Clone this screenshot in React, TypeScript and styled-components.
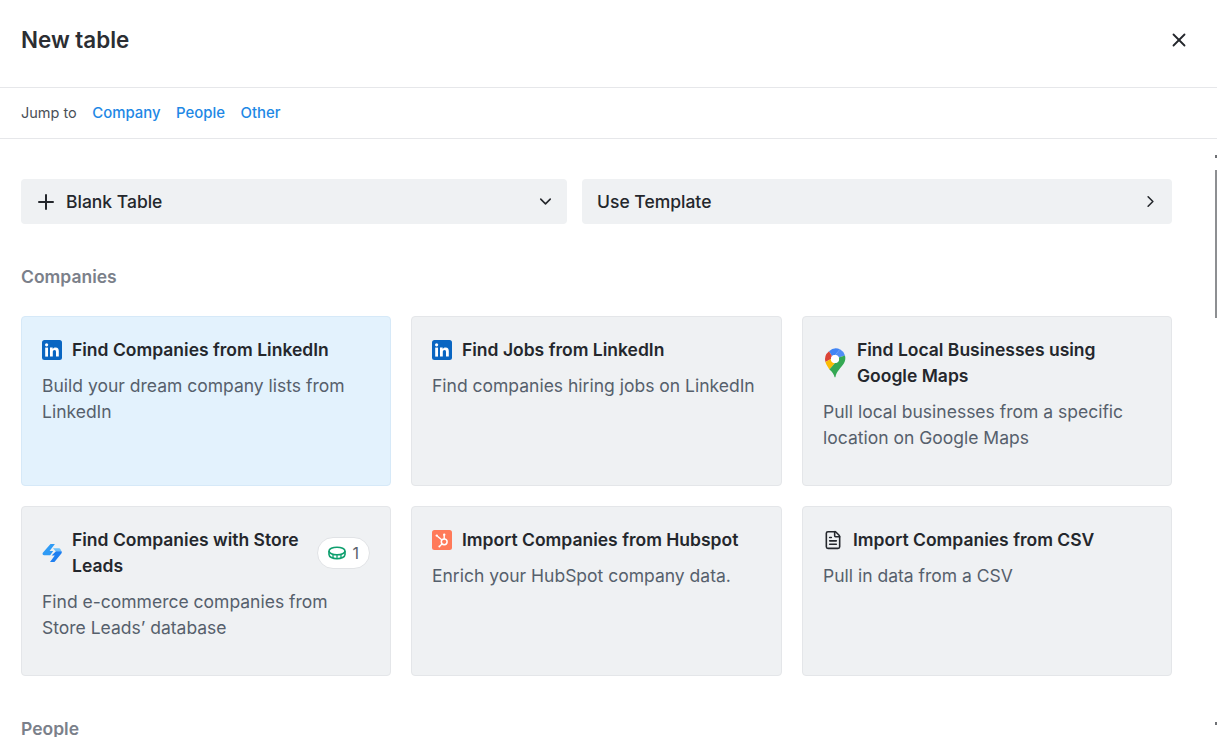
import { ReactNode } from "react";
import styled, { createGlobalStyle } from "styled-components";
import { ChevronDown, ChevronRight, FileText, Plus, X } from "lucide-react";

const GlobalStyle = createGlobalStyle`
  html, body {
    margin: 0;
    height: 100%;
    overflow: hidden;
    background: #fff;
    font-family: "Inter", "Liberation Sans", sans-serif;
    color: #24272c;
  }
  * {
    box-sizing: border-box;
  }
`;

const LinkedInIcon = () => (
  <svg width="20" height="20" viewBox="0 0 20 20">
    <rect width="20" height="20" rx="2.5" fill="#0a66c2" />
    <rect x="3.2" y="7.6" width="2.8" height="9" fill="#fff" />
    <circle cx="4.6" cy="4.8" r="1.6" fill="#fff" />
    <path
      d="M8 7.6h2.7v1.3c.5-.9 1.5-1.5 2.8-1.5 2.5 0 3.3 1.6 3.3 4v5.2H14v-4.6c0-1.2-.3-2.1-1.4-2.1-1.2 0-1.8.9-1.8 2.1v4.6H8z"
      fill="#fff"
    />
  </svg>
);

const MapsIcon = () => (
  <svg width="24" height="30" viewBox="-1 0 24 30">
    <path d="M5 3.2A10.4 10.4 0 0 1 16 1.3L11 7a4 4 0 0 0-3 1.3z" fill="#4285f4" />
    <path d="M16 1.3a10.4 10.4 0 0 1 5 6.2l-6.2 2A4 4 0 0 0 11 7z" fill="#4f8df5" />
    <path d="M5 3.2l3 5.1a4 4 0 0 0-1 2.7L1.4 14A10.6 10.6 0 0 1 5 3.2z" fill="#db4437" />
    <path d="M1.4 14L7 11a4 4 0 0 0 4 4l-5.6 6.4C3.8 19 2.2 16.6 1.4 14z" fill="#fbbc04" />
    <path d="M21 7.5c.8 3 .2 5.6-1.2 8-2.6 4.2-7.3 7.6-8.4 13.8h-.8c-.5-2.9-2.3-5.6-5.2-7.9L11 15a4 4 0 0 0 3.8-5.5z" fill="#34a853" />
    <circle cx="11" cy="11" r="4" fill="#fff" />
  </svg>
);

const StoreLeadsIcon = () => (
  <svg width="20" height="20" viewBox="0 0 20 20">
    <path d="M8.5 1h4.4L7.6 8h3.6l-3 4.2H2.2C.6 12.2 0 11 1 9.6z" fill="#2f9bf5" />
    <path d="M11 5.2h5.6c1 0 1.6.4 2 1.2l.9 1.9h-5.9z" fill="#6ec1fa" />
    <path d="M14 8.3h5.5c.5.8.4 1.4-.1 2.2L12.4 19H8l4.8-6.6H9.6z" fill="#1e7ff0" />
  </svg>
);

const HubspotIcon = () => (
  <svg width="20" height="20" viewBox="0 0 20 20">
    <rect width="20" height="20" rx="2.5" fill="#ff7a59" />
    <circle cx="12.2" cy="11.8" r="2.9" fill="none" stroke="#fff" strokeWidth="1.5" />
    <path d="M12.2 8.9V5.6M10 10L5.4 6.2M10 14l-2.2 2" stroke="#fff" strokeWidth="1.4" fill="none" />
    <circle cx="12.2" cy="4.8" r="1.2" fill="#fff" />
    <circle cx="4.8" cy="5.6" r="1.2" fill="#fff" />
    <circle cx="7.4" cy="16.4" r="1" fill="#fff" />
  </svg>
);

const CoinIcon = () => (
  <svg width="18" height="14" viewBox="0 0 18 14" fill="none" stroke="#0e9f6e" strokeWidth="1.6">
    <ellipse cx="9" cy="5" rx="8" ry="3.8" />
    <path d="M1 5v3.6C1 10.9 4.6 12.8 9 12.8s8-1.9 8-4.2V5" />
    <path d="M5 8.6v3.4M9 9v3.6M13 8.6v3.4" strokeWidth="1.3" />
  </svg>
);

type CardData = {
  icon: ReactNode;
  title: string;
  text: string;
  active?: boolean;
  credits?: number;
  tallIcon?: boolean;
};

const cards: CardData[] = [
  {
    icon: <LinkedInIcon />,
    title: "Find Companies from LinkedIn",
    text: "Build your dream company lists from LinkedIn",
    active: true,
  },
  {
    icon: <LinkedInIcon />,
    title: "Find Jobs from LinkedIn",
    text: "Find companies hiring jobs on LinkedIn",
  },
  {
    icon: <MapsIcon />,
    title: "Find Local Businesses using Google Maps",
    text: "Pull local businesses from a specific location on Google Maps",
    tallIcon: true,
  },
  {
    icon: <StoreLeadsIcon />,
    title: "Find Companies with Store Leads",
    text: "Find e-commerce companies from Store Leads’ database",
    credits: 1,
    tallIcon: true,
  },
  {
    icon: <HubspotIcon />,
    title: "Import Companies from Hubspot",
    text: "Enrich your HubSpot company data.",
  },
  {
    icon: <FileText size={20} strokeWidth={1.9} color="#24272c" />,
    title: "Import Companies from CSV",
    text: "Pull in data from a CSV",
  },
];

export default function App() {
  return (
    <Modal>
      <GlobalStyle />
      <Header>
        <Title>New table</Title>
        <CloseButton>
          <X size={22} strokeWidth={2} />
        </CloseButton>
      </Header>
      <JumpBar>
        <JumpLabel>Jump to</JumpLabel>
        <JumpLink>Company</JumpLink>
        <JumpLink>People</JumpLink>
        <JumpLink>Other</JumpLink>
      </JumpBar>
      <Content>
        <TopActions>
          <ActionButton>
            <BlankLabel>
              <Plus size={24} strokeWidth={2} />
              Blank Table
            </BlankLabel>
            <ChevronDown size={19} strokeWidth={2} />
          </ActionButton>
          <ActionButton>
            <ActionLabel>Use Template</ActionLabel>
            <ChevronRight size={19} strokeWidth={2} />
          </ActionButton>
        </TopActions>
        <SectionTitle>Companies</SectionTitle>
        <CardGrid>
          {cards.map((card) => (
            <Card key={card.title} $active={card.active}>
              <CardHead $center={card.tallIcon}>
                <CardIcon>{card.icon}</CardIcon>
                <CardTitle>{card.title}</CardTitle>
                {card.credits && (
                  <CreditBadge>
                    <CoinIcon />
                    {card.credits}
                  </CreditBadge>
                )}
              </CardHead>
              <CardText>{card.text}</CardText>
            </Card>
          ))}
        </CardGrid>
        <NextSection>People</NextSection>
      </Content>
      <ScrollArrow $top={155} />
      <ScrollThumb />
      <ScrollArrow $top={722} />
    </Modal>
  );
}

const Modal = styled.div`
  position: relative;
  width: 1217px;
  height: 737px;
  overflow: hidden;
  background: #fff;
`;

const Header = styled.header`
  display: flex;
  align-items: center;
  justify-content: space-between;
  height: 88px;
  padding: 0 27px 7px 21px;
  border-bottom: 1px solid #e6e7ea;
`;

const Title = styled.h1`
  margin: 0;
  font-size: 22.4px;
  font-weight: 600;
  line-height: 28px;
  color: #2b2e33;
`;

const CloseButton = styled.button`
  display: flex;
  padding: 0;
  border: none;
  background: none;
  color: #24272c;
  cursor: pointer;
`;

const JumpBar = styled.nav`
  display: flex;
  align-items: center;
  gap: 15.5px;
  height: 51px;
  padding: 0 21px 1px;
  border-bottom: 1px solid #e6e7ea;
  font-size: 14.9px;
`;

const JumpLabel = styled.span`
  color: #4a4f57;
  font-size: 14.5px;
`;

const JumpLink = styled.a`
  color: #1e88e5;
  font-weight: 500;
  cursor: pointer;
`;

const Content = styled.main`
  padding: 40px 45px 0 21px;
`;

const TopActions = styled.div`
  display: grid;
  grid-template-columns: 546px 590px;
  gap: 15px;
`;

const ActionButton = styled.button`
  display: flex;
  align-items: center;
  justify-content: space-between;
  height: 45px;
  padding: 0 12px 0 15px;
  border: none;
  border-radius: 4px;
  background: #eff1f3;
  color: #24272c;
  font: 500 17.5px "Inter", sans-serif;
  cursor: pointer;
`;

const ActionLabel = styled.span`
  display: flex;
  align-items: center;
`;

const BlankLabel = styled(ActionLabel)`
  gap: 8px;
  margin-left: -2px;
`;

const SectionTitle = styled.h2`
  margin: 41px 0 27px;
  font-size: 17.5px;
  font-weight: 600;
  line-height: 24px;
  color: #7b808a;
`;

const NextSection = styled(SectionTitle)`
  margin: 41px 0 0;
`;

const CardGrid = styled.div`
  display: grid;
  grid-template-columns: 370px 371px 370px;
  grid-auto-rows: 170px;
  gap: 20px;
`;

const Card = styled.div<{ $active?: boolean }>`
  padding: 20px;
  border: 1px solid ${(p) => (p.$active ? "#d6e9f8" : "#e4e6e9")};
  border-radius: 4px;
  background: ${(p) => (p.$active ? "#e3f2fd" : "#eff1f3")};
`;

const CardHead = styled.div<{ $center?: boolean }>`
  display: flex;
  align-items: ${(p) => (p.$center ? "center" : "flex-start")};
  gap: 10px;
`;

const CardIcon = styled.span`
  display: flex;
  flex: none;
  align-items: center;
  height: 26px;
`;

const CardTitle = styled.div`
  flex: 1;
  font-size: 17.5px;
  font-weight: 600;
  line-height: 26px;
  color: #24272c;
`;

const CreditBadge = styled.span`
  display: flex;
  flex: none;
  align-items: center;
  gap: 6px;
  height: 32px;
  margin-top: -1px;
  padding: 0 10px;
  border: 1px solid #e1e3e6;
  border-radius: 16px;
  background: #fff;
  font-size: 16px;
  color: #5b616b;
`;

const CardText = styled.p`
  margin: 10px 0 0;
  font-size: 17.5px;
  line-height: 26px;
  color: #56606c;
`;

const ScrollThumb = styled.div`
  position: absolute;
  top: 170px;
  right: 0;
  width: 2px;
  height: 148px;
  background: #8d8f92;
`;

const ScrollArrow = styled.div<{ $top: number }>`
  position: absolute;
  top: ${(p) => p.$top}px;
  right: 0;
  width: 2px;
  height: 3px;
  background: #6f7175;
`;
